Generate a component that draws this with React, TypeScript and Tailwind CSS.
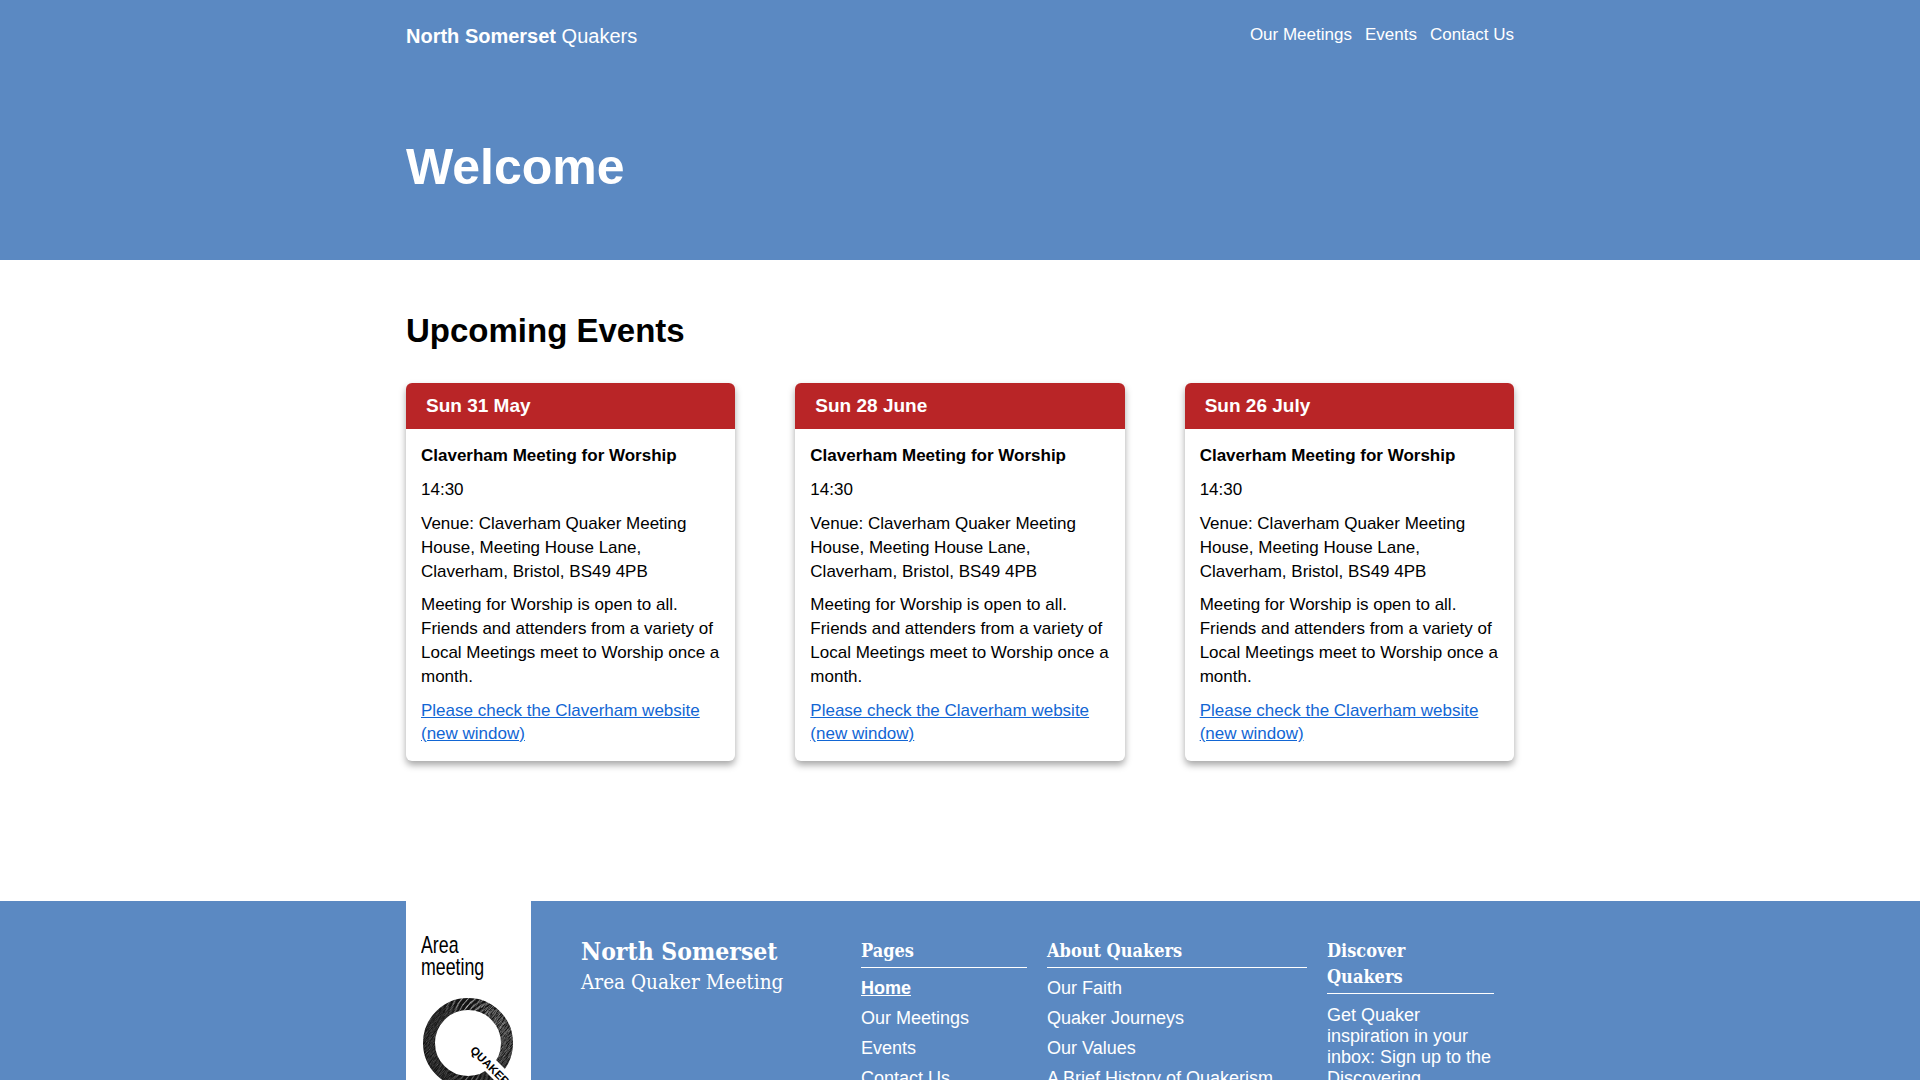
import type { ReactNode } from 'react';

const events = [
  { date: 'Sun 31 May', key: 'may' },
  { date: 'Sun 28 June', key: 'june' },
  { date: 'Sun 26 July', key: 'july' },
];

const aboutLinks = ['Our Faith', 'Quaker Journeys', 'Our Values', 'A Brief History of Quakerism'];
const pageLinks = ['Our Meetings', 'Events', 'Contact Us'];

// rough hatching for the Q ring, all strokes lean the same way
const hatch = Array.from({ length: 520 }, (_, i) => {
  const a = (i / 520) * Math.PI * 2 * 7;
  const jitter = ((i * 37) % 29) / 29;
  const r = 33 + jitter * 13;
  const len = 4 + ((i * 13) % 6);
  const tilt = -0.9 + (((i * 7) % 5) - 2) * 0.06;
  const cx = 46 + Math.cos(a) * r;
  const cy = 46 + Math.sin(a) * r;
  return {
    x1: cx - (Math.cos(tilt) * len) / 2,
    y1: cy - (Math.sin(tilt) * len) / 2,
    x2: cx + (Math.cos(tilt) * len) / 2,
    y2: cy + (Math.sin(tilt) * len) / 2,
    // top right of the ring reads lighter
    o: 0.25 + 0.35 * Math.max(0, Math.sin(a - 0.9) * -1),
  };
});

const QuakerRing = () => (
  <svg width="92" height="92" viewBox="0 0 92 92" className="block overflow-visible">
    <circle cx="46" cy="46" r="39" fill="none" stroke="#141414" strokeWidth="12" />
    {hatch.map((l, i) => (
      <line key={i} x1={l.x1} y1={l.y1} x2={l.x2} y2={l.y2} stroke="#fff" strokeOpacity={l.o} strokeWidth="0.5" />
    ))}
    <polygon points="44,55 55,44 106,95 95,106" fill="#fff" />
    <text
      x="47.5"
      y="54"
      transform="rotate(45 47.5 54)"
      fontFamily="'Liberation Sans', sans-serif"
      fontWeight="700"
      fontSize="11.5"
      fill="#000"
    >
      QUAKER
    </text>
  </svg>
);

const EventCard = ({ date }: { date: string }) => (
  <div className="bg-white rounded-md shadow-[0_4px_7px_rgba(0,0,0,0.35)] overflow-hidden">
    <div className="bg-[#b92527] text-white font-bold text-[19px] leading-[23px] px-5 pt-[11px] h-[46px]">{date}</div>
    <div className="px-[15px] pt-[15px] pb-[16px] text-[17px] leading-6 text-black">
      <p className="font-bold mb-[10px]">Claverham Meeting for Worship</p>
      <p className="mb-[10px]">14:30</p>
      <p className="mb-[9px]">Venue: Claverham Quaker Meeting House, Meeting House Lane, Claverham, Bristol, BS49 4PB</p>
      <p className="mb-[10px]">
        Meeting for Worship is open to all. Friends and attenders from a variety of Local Meetings meet to Worship once
        a month.
      </p>
      <a href="#" className="text-[#1266d4] underline leading-[23px] block">
        Please check the Claverham website (new window)
      </a>
    </div>
  </div>
);

const FooterHeading = ({ children }: { children: ReactNode }) => (
  <h3 className="font-['DejaVu_Serif',serif] font-bold [font-stretch:condensed] text-[18px] leading-[26px] text-white border-b border-white pb-[3px] mb-[5px]">
    {children}
  </h3>
);

export default function App() {
  return (
    <div className="font-['Liberation_Sans',Arial,sans-serif] bg-white min-h-screen">
      <header className="bg-[#5b89c2] h-[260px] text-white">
        <div className="w-[1108px] mx-auto">
          <div className="flex items-start justify-between pt-[22px]">
            <div className="text-[20px] leading-[28px]">
              <span className="font-bold">North Somerset</span> <span>Quakers</span>
            </div>
            <nav className="flex gap-[13px] text-[17px] leading-6 pt-[1px]">
              <a href="#">Our Meetings</a>
              <a href="#">Events</a>
              <a href="#">Contact Us</a>
            </nav>
          </div>
          <h1 className="font-bold text-[50px] leading-[60px] mt-[87px]">Welcome</h1>
        </div>
      </header>

      <main className="w-[1108px] mx-auto pt-[49px] pb-[140px]">
        <h2 className="font-bold text-[33px] leading-[44px] text-black mb-[30px]">Upcoming Events</h2>
        <div className="grid grid-cols-3 gap-[60px]">
          {events.map(ev => (
            <EventCard key={ev.key} date={ev.date} />
          ))}
        </div>
      </main>

      <footer className="bg-[#5b89c2] text-white">
        <div className="w-[1108px] mx-auto flex items-start">
          <div className="w-[125px] bg-white self-stretch text-black pl-[15px] pt-[33px]">
            <div className="text-[24px] leading-[22px] w-[108px] scale-x-[0.74] origin-left">Area meeting</div>
            <div className="mt-[19px] ml-[1px]">
              <QuakerRing />
            </div>
          </div>
          <div className="w-[330px] pl-[50px] pt-[37px]">
            <div className="font-['DejaVu_Serif',serif] font-bold [font-stretch:condensed] text-[24.5px] leading-[28px] whitespace-nowrap">
              North Somerset
            </div>
            <div className="font-['DejaVu_Serif',serif] [font-stretch:condensed] text-[20.5px] leading-[28px] mt-[2px] whitespace-nowrap">
              Area Quaker Meeting
            </div>
          </div>
          <div className="w-[166px] pt-[37px]">
            <FooterHeading>Pages</FooterHeading>
            <ul className="text-[18px] leading-[30px]">
              <li className="font-bold underline">Home</li>
              {pageLinks.map(l => (
                <li key={l}>{l}</li>
              ))}
            </ul>
          </div>
          <div className="w-[260px] ml-[20px] pt-[37px]">
            <FooterHeading>About Quakers</FooterHeading>
            <ul className="text-[18px] leading-[30px]">
              {aboutLinks.map(l => (
                <li key={l}>{l}</li>
              ))}
            </ul>
          </div>
          <div className="w-[167px] ml-[20px] pt-[37px] pb-[40px]">
            <FooterHeading>
              Discover
              <br />
              Quakers
            </FooterHeading>
            <p className="text-[18px] leading-[21px] mt-[11px]">
              Get Quaker inspiration in your inbox: Sign up to the Discovering Quakers newsletter.
            </p>
          </div>
        </div>
      </footer>
    </div>
  );
}
